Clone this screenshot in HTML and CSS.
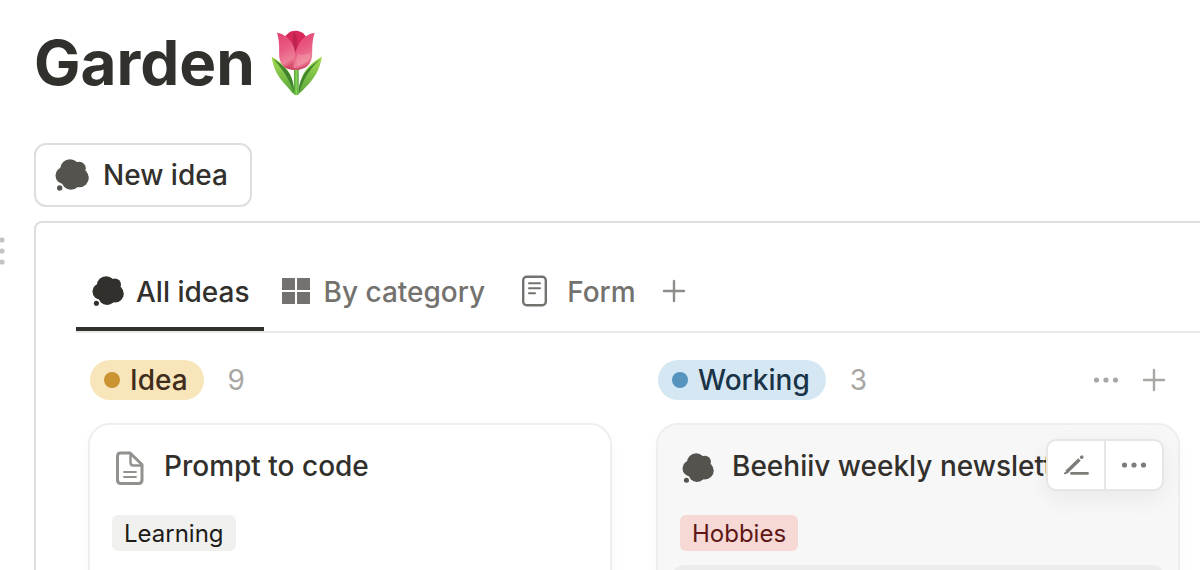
FILE: index.html
```html
<!DOCTYPE html>
<html lang="en">
<head>
    <meta charset="UTF-8">
    <meta name="viewport" content="width=device-width, initial-scale=1.0">
    <title>Garden</title>
    <link rel="stylesheet" href="styles.css">
</head>
<body>
    <svg class="sprite" aria-hidden="true">
        <symbol id="thought" viewBox="0 0 34 32">
            <circle cx="15" cy="10" r="9.8"/>
            <circle cx="24.3" cy="9.3" r="6.5"/>
            <circle cx="24.4" cy="18.8" r="9.4"/>
            <circle cx="16" cy="21.3" r="9.5"/>
            <circle cx="9" cy="16.5" r="8.5"/>
            <circle cx="17.500" cy="15.500" r="13"/>
            <circle cx="4.7" cy="29" r="2.7"/>
        </symbol>
        <symbol id="plus" viewBox="0 0 24 24">
            <path d="M12 2v20M2 12h20" fill="none" stroke="currentColor" stroke-width="2.4" stroke-linecap="round"/>
        </symbol>
        <symbol id="dots" viewBox="0 0 26 8">
            <circle cx="3.5" cy="4" r="2.6"/>
            <circle cx="13" cy="4" r="2.6"/>
            <circle cx="22.5" cy="4" r="2.6"/>
        </symbol>
    </svg>

    <header class="page-header">
        <h1>Garden</h1>
        <svg class="tulip" viewBox="36 15 154 195" role="img" aria-label="Tulip">
            <defs>
                <linearGradient id="petal" x1="0" y1="0" x2="0.3" y2="1">
                    <stop offset="0" stop-color="#e33f72"/>
                    <stop offset="0.5" stop-color="#e95a82"/>
                    <stop offset="0.85" stop-color="#ee8098"/>
                    <stop offset="1" stop-color="#d8506c"/>
                </linearGradient>
                <linearGradient id="leaf" x1="0" y1="0" x2="0" y2="1">
                    <stop offset="0" stop-color="#a4dc52"/>
                    <stop offset="1" stop-color="#58a53a"/>
                </linearGradient>
                <linearGradient id="stem">
                    <stop offset="0" stop-color="#4c9f34"/>
                    <stop offset="0.5" stop-color="#8bd65a"/>
                    <stop offset="1" stop-color="#4b9b35"/>
                </linearGradient>
            </defs>
            <path fill="url(#leaf)" d="M38 94c24 13 47 34 57 57 7 17 10 36 10 53-6-2-10-9-17-17-28-29-45-54-50-93z"/>
            <path fill="#3f832e" d="M42 100c22 13 44 33 53 53 7 16 9 32 9 46-16-42-36-72-62-99z"/>
            <path fill="url(#leaf)" d="M187 94c-26 14-48 34-58 57-8 17-12 36-12 53 6-2 11-9 18-16 29-28 45-54 52-94z"/>
            <path fill="#3f832e" d="M180 103c-22 14-41 32-50 50-8 16-12 32-11 46 14-43 34-71 61-96z"/>
            <path fill="url(#stem)" d="M104 128h14v78q-7 4-14 0z"/>
            <path fill="#d72858" d="M74 42c7-16 19-25 33-25 16 0 28 7 35 22l-8 70H82z"/>
            <path fill="#be2350" d="M105 20c7 12 10 30 7 49l-6 15c-5-22-8-44-1-64z"/>
            <path fill="url(#petal)" d="M54 23c20 3 42 19 50 43 6 20 8 43 3 67-29 0-48-13-47-51 1-21-1-42-6-59z"/>
            <path fill="url(#petal)" d="M165 24c-20 1-40 18-49 38-9 18-16 41-12 71 36 1 55-18 54-51 0-23 1-40 7-58z"/>
            <path fill="#f29baa" opacity=".5" d="M116 86c14 5 28 3 38-5-1 25-14 39-41 40-4-12-2-25 3-35z"/>
            <path fill="#bf3859" opacity=".5" d="M74 121c20 8 48 10 70-1-10 9-22 13-37 13s-26-5-33-12z"/>
        </svg>
    </header>

    <main>
        <button type="button" class="new-idea">
            <svg class="thought"><use href="#thought"/></svg>
            New idea
        </button>

        <div class="block">
            <div class="gutter">
                <svg class="drag-handle" viewBox="0 0 6 30">
                    <circle cx="2" cy="4" r="2.6"/>
                    <circle cx="2" cy="15" r="2.6"/>
                    <circle cx="2" cy="26" r="2.6"/>
                </svg>
            </div>

            <section class="database">
                <nav class="tabs">
                    <a href="#all" class="tab active">
                        <svg class="tab-icon"><use href="#thought"/></svg>
                        All ideas
                    </a>
                    <a href="#category" class="tab">
                        <svg class="tab-icon" viewBox="0 0 32 32">
                            <path d="M2 3h13v12H2zM17 3h13v12H17zM2 17h13v12H2zM17 17h13v12H17z"/>
                        </svg>
                        By category
                    </a>
                    <a href="#form" class="tab">
                        <svg class="tab-icon wide" viewBox="2 0 40 32" fill="none" stroke="currentColor" stroke-linecap="round">
                            <rect x="10.2" y="1.7" width="22.6" height="28.6" rx="3.5" stroke-width="2.4"/>
                            <path d="M16 8.2h11M16 13.2h11M16 18.2h6" stroke-width="2"/>
                        </svg>
                        Form
                    </a>
                    <button type="button" class="icon-button add-view" aria-label="Add view">
                        <svg class="plus"><use href="#plus"/></svg>
                    </button>
                </nav>

                <div class="board">
                    <section class="column">
                        <header class="column-header">
                            <h2 class="status idea">Idea</h2>
                            <span class="count">9</span>
                        </header>
                        <article class="card">
                            <h3 class="card-title">
                                <svg class="page-icon" viewBox="0 0 36 36" fill="none" stroke="currentColor" stroke-linejoin="round" stroke-linecap="round">
                                    <path d="M8.5 3h9.500l12 11.500v15.500q0 3.500-3.500 3.500H9q-3.500 0-3.500-3.500V6.500q0-3.500 3-3.500z" stroke-width="3"/>
                                    <path d="M18.500 4v8.500q0 3 3 3h8" stroke-width="2.400"/>
                                    <path d="M12 22h12M12 27h12" stroke-width="1.800"/>
                                </svg>
                                Prompt to code
                            </h3>
                            <span class="tag">Learning</span>
                        </article>
                    </section>

                    <section class="column">
                        <header class="column-header">
                            <h2 class="status working">Working</h2>
                            <span class="count">3</span>
                            <div class="column-actions">
                                <button type="button" class="icon-button" aria-label="Column options">
                                    <svg class="dots"><use href="#dots"/></svg>
                                </button>
                                <button type="button" class="icon-button" aria-label="Add card">
                                    <svg class="plus"><use href="#plus"/></svg>
                                </button>
                            </div>
                        </header>
                        <article class="card hovered">
                            <h3 class="card-title">
                                <svg class="page-icon dark" viewBox="-1 -2 36 36"><use href="#thought" x="1" y="1" width="32" height="30"/></svg>
                                Beehiiv weekly newsletter
                            </h3>
                            <span class="tag red">Hobbies</span>
                            <div class="sub-item"></div>
                            <div class="toolbar">
                                <button type="button" aria-label="Edit">
                                    <svg class="pencil" viewBox="0 0 26 22" fill="none" stroke="currentColor" stroke-linecap="round">
                                        <path d="M3.500 18L16.500 5.500" stroke-width="3.400" stroke-linecap="butt"/>
                                        <path d="M2 19.300l2.500-1.300" stroke-width="2"/>
                                        <path d="M18.600 3.300l.3-.3" stroke-width="3.400"/>
                                        <path d="M8.500 19.400h16" stroke-width="2.800"/>
                                    </svg>
                                </button>
                                <button type="button" aria-label="More">
                                    <svg class="dots"><use href="#dots"/></svg>
                                </button>
                            </div>
                        </article>
                    </section>
                </div>
            </section>
        </div>
    </main>
</body>
</html>
```

FILE: styles.css
```css
* {
    box-sizing: border-box;
}
body {
    margin: 0;
    height: 100vh;
    overflow: hidden;
    background-color: #fff;
    color: #32302c;
    font-family: Inter, "Liberation Sans", sans-serif;
    font-size: 28px;
    font-weight: 500;
    line-height: 40px;
}
h1, h2, h3 {
    margin: 0;
}
svg {
    display: block;
    flex: none;
    fill: currentColor;
}
svg[fill="none"] {
    fill: none;
}
button {
    margin: 0;
    padding: 0;
    border: none;
    background: none;
    color: inherit;
    font: inherit;
    cursor: pointer;
}
.sprite {
    position: absolute;
    width: 0;
    height: 0;
}

/* page title */
.page-header {
    display: flex;
    align-items: center;
    gap: 16px;
    padding: 23px 34px 40px;
}
h1 {
    font-size: 62px;
    font-weight: 700;
    line-height: 80px;
}
.tulip {
    width: 52px;
    height: 66px;
}
.new-idea {
    display: flex;
    align-items: center;
    gap: 14px;
    height: 64px;
    margin: 0 0 14px 34px;
    padding: 0 22px 0 19px;
    border: 2px solid #dededd;
    border-radius: 12px;
}
.thought {
    width: 34px;
    height: 32px;
    color: #55534e;
}

/* database block */
.block {
    display: flex;
}
.gutter {
    flex: none;
    width: 34px;
    padding-top: 15px;
}
.drag-handle {
    width: 6px;
    height: 30px;
    color: #c4c3c1;
}
.database {
    flex: 1;
    min-width: 0;
    padding: 34px 0 0 40px;
    border: 2px solid #dededd;
    border-right: none;
    border-radius: 8px 0 0 0;
}
.tabs {
    display: flex;
    border-bottom: 2px solid #e9e9e8;
}
.tab {
    display: flex;
    align-items: center;
    gap: 12px;
    height: 74px;
    padding: 0 14px 0 16px;
    border-bottom: 4px solid transparent;
    color: #73726e;
    text-decoration: none;
}
.tab.active {
    border-color: #32302c;
    color: #32302c;
}
.tab-icon {
    width: 32px;
    height: 32px;
    margin-bottom: 2px;
}
.tab-icon.wide {
    width: 40px;
}
.icon-button {
    display: flex;
    align-items: center;
    justify-content: center;
    color: #a8a7a4;
}
.add-view {
    width: 48px;
    padding-bottom: 6px;
    color: #8e8d8a;
}
.plus {
    width: 24px;
    height: 24px;
}
.dots {
    width: 26px;
    height: 8px;
}

/* board */
.board {
    display: flex;
    gap: 44px;
    padding: 27px 0 0 12px;
}
.column {
    flex: none;
    width: 524px;
}
.column-header {
    display: flex;
    align-items: center;
    gap: 24px;
    margin-bottom: 23px;
    padding: 0 14px 0 2px;
}
.status {
    display: flex;
    align-items: center;
    gap: 10px;
    padding: 0 16px 0 14px;
    border-radius: 20px;
    font-size: 28px;
    font-weight: 500;
}
.status::before {
    content: "";
    width: 16px;
    height: 16px;
    border-radius: 50%;
}
.idea {
    background-color: #f8e5ba;
    color: #402c1b;
}
.idea::before {
    background-color: #ca9433;
}
.working {
    background-color: #d5e7f3;
    color: #193347;
}
.working::before {
    background-color: #5793bf;
}
.count {
    color: #a8a7a4;
    font-weight: 400;
}
.column-actions {
    display: flex;
    gap: 23px;
    margin-left: auto;
}
.card {
    position: relative;
    height: 240px;
    padding: 21px 14px;
    border: 2px solid #eeeeed;
    border-radius: 22px;
    box-shadow: 0 4px 12px rgba(0, 0, 0, 0.03);
}
.hovered {
    background-color: #f7f7f7;
}
.card-title {
    display: flex;
    align-items: center;
    gap: 16px;
    margin-bottom: 29px;
    padding-left: 8px;
    font-size: 28px;
    font-weight: 500;
    white-space: nowrap;
}
.page-icon {
    width: 36px;
    height: 36px;
    margin-top: 4px;
    color: #91918e;
}
.page-icon.dark {
    color: #55534e;
}
.tag {
    display: block;
    width: fit-content;
    margin-left: 8px;
    padding: 2px 12px 0;
    border-radius: 6px;
    background-color: #f0f0ef;
    color: #1d1b18;
    font-size: 24px;
    font-weight: 400;
    line-height: 34px;
}
.tag.red {
    background-color: #f6d8d5;
    color: #5d1715;
}
.sub-item {
    height: 64px;
    margin-top: 14px;
    border-radius: 12px;
    background-color: #ececec;
}

/* hover actions, float over the card title */
.toolbar {
    position: absolute;
    top: 14px;
    right: 14px;
    display: flex;
    border: 2px solid #e6e6e5;
    border-radius: 10px;
    background-color: #fff;
    color: #7d7c78;
    box-shadow: 0 8px 24px rgba(0, 0, 0, 0.06);
}
.toolbar button {
    display: flex;
    align-items: center;
    justify-content: center;
    width: 56px;
    height: 48px;
}
.toolbar button + button {
    width: 58px;
    border-left: 2px solid #e6e6e5;
}
.pencil {
    width: 26px;
    height: 22px;
}
```
